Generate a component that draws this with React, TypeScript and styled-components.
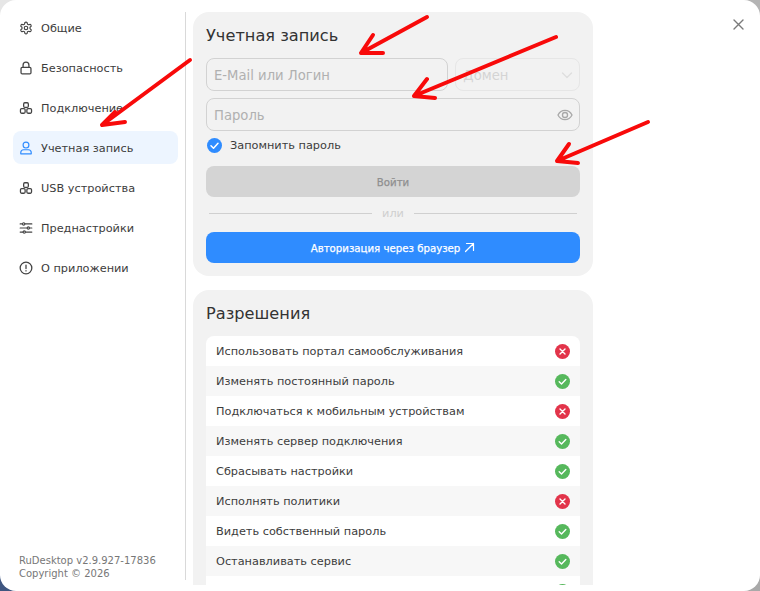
import React from "react";
import styled, { createGlobalStyle } from "styled-components";

const FONT = `"DejaVu Sans", sans-serif`;

const Global = createGlobalStyle`
  html, body { margin: 0; padding: 0; background: #fff; }
  body { font-family: ${FONT}; width: 760px; height: 591px; overflow: hidden; }
`;

const Backdrop = styled.div`
  position: relative;
  width: 760px;
  height: 591px;
  overflow: hidden;
  background: conic-gradient(#b4b4b4 0 25%, #a9a9a9 0 50%, #3f5680 0 75%, #e6e6e6 0);
`;

const Win = styled.div`
  width: 760px;
  height: 591px;
  background: #fff;
  border-radius: 16px;
  display: flex;
  overflow: hidden;
`;

const Sidebar = styled.nav`
  width: 186px;
  height: 568px;
  margin-top: 12px;
  box-sizing: border-box;
  border-right: 1px solid #d9d9d9;
  padding: 0 7px 0 13px;
  display: flex;
  flex-direction: column;
  flex-shrink: 0;
`;

const NavList = styled.div`
  margin-top: -1px;
  display: flex;
  flex-direction: column;
  gap: 7px;
`;

const NavItem = styled.div<{ $active?: boolean }>`
  height: 33px;
  border-radius: 8px;
  display: flex;
  align-items: center;
  padding-left: 6px;
  gap: 8px;
  font-size: 11.3px;
  color: #3c3c3c;
  background: ${(p) => (p.$active ? "#edf5ff" : "transparent")};
  svg { flex-shrink: 0; color: ${(p) => (p.$active ? "#2f8cff" : "#444")}; }
`;

const NudgedText = styled.span`
  padding-top: 2px;
`;

const Version = styled.div`
  margin-top: auto;
  padding: 0 0 0 6px;
  font-size: 10px;
  line-height: 13px;
  color: #777;
`;

const Main = styled.main`
  width: 400px;
  padding: 12px 0 0 7px;
  display: flex;
  flex-direction: column;
  gap: 14px;
  flex-shrink: 0;
  height: 573px;
  overflow: hidden;
`;

const Card = styled.section`
  background: #f2f2f2;
  border-radius: 16px;
  padding: 13px 13px 13px;
  flex-shrink: 0;
`;

const Heading = styled.h2`
  margin: 0;
  font-size: 16.2px;
  font-weight: 400;
  line-height: 22px;
  color: #333;
`;

const InputRow = styled.div`
  margin-top: 11px;
  display: flex;
  gap: 7px;
`;

const Field = styled.div<{ $muted?: boolean; $grow?: boolean }>`
  height: 33px;
  box-sizing: border-box;
  border: 1px solid ${(p) => (p.$muted ? "#e6e6e6" : "#d2d2d2")};
  border-radius: 8px;
  width: ${(p) => (p.$grow ? "100%" : p.$muted ? "125px" : "243px")};
  padding: 0 6px 0 7px;
  display: flex;
  align-items: center;
  justify-content: space-between;
  font-size: 13.2px;
  color: ${(p) => (p.$muted ? "#d4d4d4" : "#b0b0b0")};
`;

const PasswordRow = styled(InputRow)`
  margin-top: 7px;
`;

const Remember = styled.label`
  margin-top: 6px;
  height: 16px;
  padding-left: 1px;
  display: flex;
  align-items: center;
  gap: 8px;
  font-size: 11.3px;
  color: #3c3c3c;
`;

const LoginBtn = styled.div`
  margin-top: 13px;
  height: 31px;
  border-radius: 8px;
  background: #d4d4d4;
  color: #8f8f8f;
  font-size: 10.2px;
  -webkit-text-stroke: 0.25px #8f8f8f;
  display: flex;
  align-items: center;
  justify-content: center;
`;

const Divider = styled.div`
  margin: 8px 3px 0;
  height: 17px;
  display: flex;
  align-items: center;
  gap: 10px;
  color: #cfcfcf;
  font-size: 11.3px;
  &::before, &::after {
    content: "";
    flex: 1;
    height: 1px;
    background: #d0d0d0;
  }
`;

const BrowserBtn = styled.div`
  margin-top: 10px;
  height: 31px;
  border-radius: 8px;
  background: #2f8cff;
  color: #fff;
  font-size: 10.2px;
  -webkit-text-stroke: 0.25px #fff;
  display: flex;
  align-items: center;
  justify-content: center;
  gap: 4px;
`;

const PermCard = styled(Card)`
  padding-bottom: 0;
`;

const List = styled.div`
  margin-top: 11px;
  border-radius: 8px;
  overflow: hidden;
`;

const Row = styled.div<{ $odd: boolean }>`
  height: 30px;
  padding: 0 10px;
  box-sizing: border-box;
  background: ${(p) => (p.$odd ? "#f7f7f7" : "#fff")};
  display: flex;
  align-items: center;
  justify-content: space-between;
  font-size: 11.3px;
  color: #3c3c3c;
`;

const Close = styled.div`
  position: absolute;
  left: 733px;
  top: 15px;
  width: 11px;
  height: 11px;
  color: #7a7a7a;
`;

const Arrows = styled.svg`
  position: absolute;
  left: 0;
  top: 0;
  pointer-events: none;
`;

const Gear = () => (
  <svg width="14" height="14" viewBox="0 0 24 24" fill="none" stroke="currentColor" strokeWidth="2" strokeLinecap="round" strokeLinejoin="round">
    <path d="M12.2 2h-.4a2 2 0 0 0-2 2v.2a2 2 0 0 1-1 1.7l-.4.3a2 2 0 0 1-2 0l-.2-.1a2 2 0 0 0-2.7.7l-.2.4a2 2 0 0 0 .7 2.7l.2.1a2 2 0 0 1 1 1.7v.6a2 2 0 0 1-1 1.7l-.2.1a2 2 0 0 0-.7 2.7l.2.4a2 2 0 0 0 2.7.7l.2-.1a2 2 0 0 1 2 0l.4.3a2 2 0 0 1 1 1.7v.2a2 2 0 0 0 2 2h.4a2 2 0 0 0 2-2v-.2a2 2 0 0 1 1-1.7l.4-.3a2 2 0 0 1 2 0l.2.1a2 2 0 0 0 2.7-.7l.2-.4a2 2 0 0 0-.7-2.7l-.2-.1a2 2 0 0 1-1-1.7v-.6a2 2 0 0 1 1-1.7l.2-.1a2 2 0 0 0 .7-2.7l-.2-.4a2 2 0 0 0-2.7-.7l-.2.1a2 2 0 0 1-2 0l-.4-.3a2 2 0 0 1-1-1.7V4a2 2 0 0 0-2-2z" />
    <circle cx="12" cy="12" r="3" />
  </svg>
);
const Lock = () => (
  <svg width="14" height="14" viewBox="0 0 24 24" fill="none" stroke="currentColor" strokeWidth="2.2" strokeLinecap="round" strokeLinejoin="round">
    <rect x="3.5" y="11" width="17" height="11" rx="2" />
    <path d="M7 11V7a5 5 0 0 1 10 0v4" />
  </svg>
);
const Cubes = () => (
  <svg width="14" height="14" viewBox="0 0 24 24" fill="none" stroke="currentColor" strokeWidth="2.2" strokeLinejoin="round">
    <rect x="8" y="3" width="8" height="8" rx="2" />
    <rect x="2.500" y="13" width="8" height="8" rx="2" />
    <rect x="13.500" y="13" width="8" height="8" rx="2" />
  </svg>
);
const User = () => (
  <svg width="14" height="14" viewBox="0 0 24 24" fill="none" stroke="currentColor" strokeWidth="2" strokeLinecap="round" strokeLinejoin="round">
    <circle cx="12" cy="7" r="5" />
    <path d="M3 22v-2a5 5 0 0 1 5-5h8a5 5 0 0 1 5 5v2z" />
  </svg>
);
const Sliders = () => (
  <svg width="14" height="14" viewBox="0 0 24 24" fill="none" stroke="currentColor" strokeWidth="2" strokeLinecap="round">
    <path d="M2 5h20M2 12h20M2 19h20" />
    <circle cx="8" cy="5" r="2" fill="#fff" />
    <circle cx="16" cy="12" r="2" fill="#fff" />
    <circle cx="9" cy="19" r="2" fill="#fff" />
  </svg>
);
const Info = () => (
  <svg width="14" height="14" viewBox="0 0 24 24" fill="none" stroke="currentColor" strokeWidth="2.2" strokeLinecap="round">
    <circle cx="12" cy="12" r="10" />
    <path d="M12 7v6M12 16.600v.4" />
  </svg>
);
const Chevron = () => (
  <svg width="12" height="12" viewBox="0 0 12 12" fill="none" stroke="#dedede" strokeWidth="1.3" strokeLinecap="round" strokeLinejoin="round">
    <path d="M1.500 4l4.500 4.500L10.500 4" />
  </svg>
);
const Eye = () => (
  <svg width="16" height="16" viewBox="0 0 24 24" fill="none" stroke="#a8a8a8" strokeWidth="2" strokeLinecap="round" strokeLinejoin="round">
    <path d="M1.500 12C4 7 8 5 12 5s8 2 10.500 7C20 17 16 19 12 19S4 17 1.500 12z" />
    <circle cx="12" cy="12" r="3.800" />
  </svg>
);
const CheckBadge = () => (
  <svg width="15" height="15" viewBox="0 0 15 15">
    <circle cx="7.500" cy="7.500" r="7.500" fill="#2f8cff" />
    <path d="M4 7.800l2.500 2.400L11 5.300" fill="none" stroke="#fff" strokeWidth="1.500" strokeLinecap="round" strokeLinejoin="round" />
  </svg>
);
const Ok = () => (
  <svg width="15" height="15" viewBox="0 0 15 15">
    <circle cx="7.500" cy="7.500" r="7.500" fill="#56b85c" />
    <path d="M4.200 7.800l2.300 2.100L10.800 5.500" fill="none" stroke="#fff" strokeWidth="1.400" strokeLinecap="round" strokeLinejoin="round" />
  </svg>
);
const No = () => (
  <svg width="15" height="15" viewBox="0 0 15 15">
    <circle cx="7.500" cy="7.500" r="7.500" fill="#e2344a" />
    <path d="M5 5l5 5M10 5l-5 5" fill="none" stroke="#fff" strokeWidth="1.400" strokeLinecap="round" />
  </svg>
);
const External = () => (
  <svg width="11" height="11" viewBox="0 0 11 11" fill="none" stroke="#fff" strokeWidth="1.200" strokeLinecap="round" strokeLinejoin="round">
    <path d="M1.500 9.500L9.500 1.500M2.500 1.500h7v7" />
  </svg>
);

const nav = [
  { label: "Общие", icon: <Gear /> },
  { label: "Безопасность", icon: <Lock /> },
  { label: "Подключение", icon: <Cubes /> },
  { label: "Учетная запись", icon: <User />, active: true },
  { label: "USB устройства", icon: <Cubes /> },
  { label: "Преднастройки", icon: <Sliders /> },
  { label: "О приложении", icon: <Info /> },
];

const perms: [string, boolean][] = [
  ["Использовать портал самообслуживания", false],
  ["Изменять постоянный пароль", true],
  ["Подключаться к мобильным устройствам", false],
  ["Изменять сервер подключения", true],
  ["Сбрасывать настройки", true],
  ["Исполнять политики", false],
  ["Видеть собственный пароль", true],
  ["Останавливать сервис", true],
  ["", true],
];

const arrows = [
  "M190 60 L102 125 M125 122 L102 125 L115 112",
  "M427 17 L361 53 M383 53 L361 53 L373 35",
  "M556 37 L414 96 M435 98 L414 96 L427 79",
  "M648 122 L557 161 M578 163 L557 161 L569 144",
];

export default function App() {
  return (
    <Backdrop>
      <Global />
      <Win>
        <Sidebar>
          <NavList>
            {nav.map((n) => (
              <NavItem key={n.label} $active={n.active}>
                {n.icon}
                <NudgedText>{n.label}</NudgedText>
              </NavItem>
            ))}
          </NavList>
          <Version>
            RuDesktop v2.9.927-17836
            <br />
            Copyright © 2026
          </Version>
        </Sidebar>
        <Main>
          <Card>
            <Heading>Учетная запись</Heading>
            <InputRow>
              <Field><NudgedText>E-Mail или Логин</NudgedText></Field>
              <Field $muted>
                <NudgedText>Домен</NudgedText>
                <Chevron />
              </Field>
            </InputRow>
            <PasswordRow>
              <Field $grow>
                <NudgedText>Пароль</NudgedText>
                <Eye />
              </Field>
            </PasswordRow>
            <Remember>
              <CheckBadge />
              Запомнить пароль
            </Remember>
            <LoginBtn><NudgedText>Войти</NudgedText></LoginBtn>
            <Divider>или</Divider>
            <BrowserBtn>
              <NudgedText>Авторизация через браузер</NudgedText>
              <External />
            </BrowserBtn>
          </Card>
          <PermCard>
            <Heading>Разрешения</Heading>
            <List>
              {perms.map(([t, ok], i) => (
                <Row key={i} $odd={i % 2 === 1}>
                  <span>{t}</span>
                  {ok ? <Ok /> : <No />}
                </Row>
              ))}
            </List>
          </PermCard>
        </Main>
      </Win>
      <Close>
        <svg width="11" height="11" viewBox="0 0 11 11" stroke="currentColor" strokeWidth="1.400" strokeLinecap="round">
          <path d="M1 1l9 9M10 1l-9 9" />
        </svg>
      </Close>
      <Arrows width="760" height="591" viewBox="0 0 760 591" fill="none" stroke="#f80a0a" strokeWidth="4" strokeLinecap="round" strokeLinejoin="round">
        {arrows.map((d) => (
          <path key={d} d={d} />
        ))}
      </Arrows>
    </Backdrop>
  );
}
